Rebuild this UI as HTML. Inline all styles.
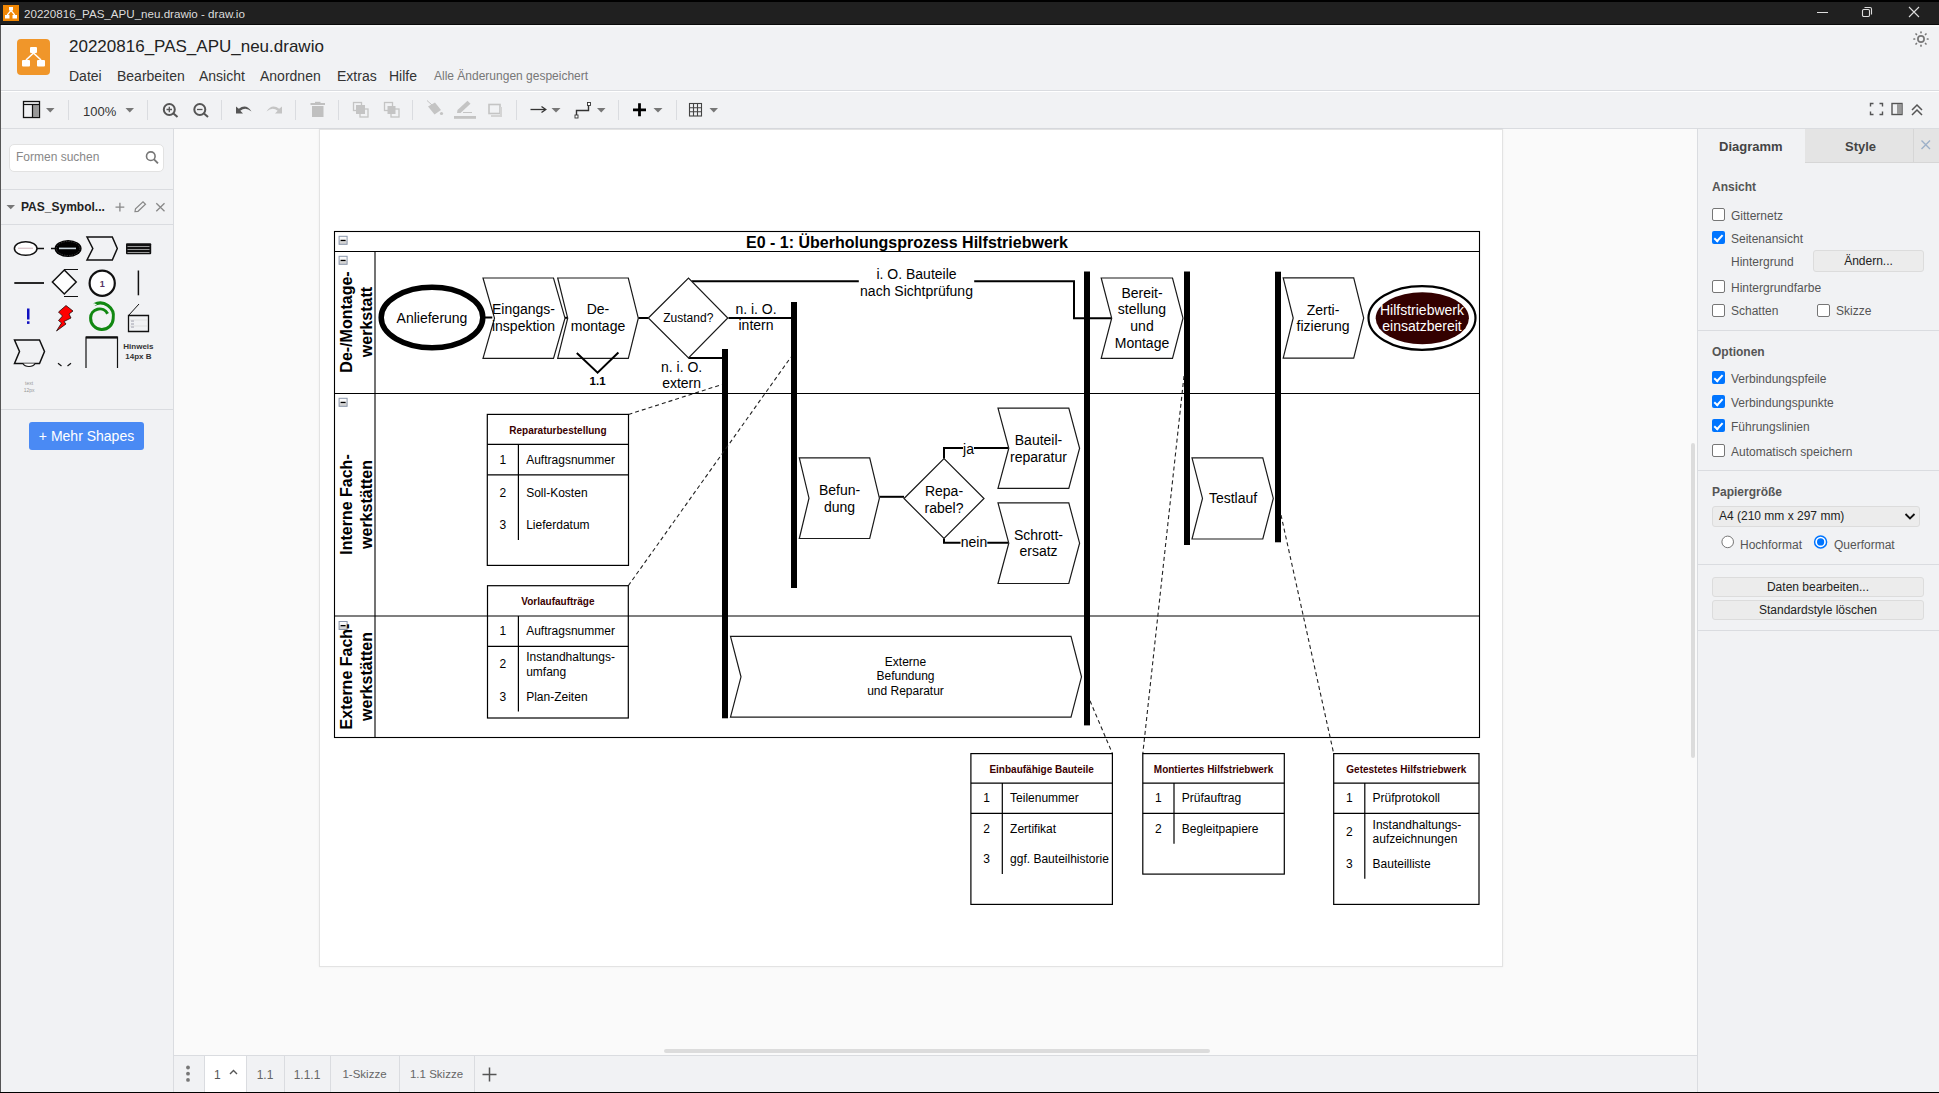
<!DOCTYPE html>
<html><head><meta charset="utf-8">
<style>
*{margin:0;padding:0;box-sizing:border-box}
html,body{width:1939px;height:1093px;overflow:hidden;background:#f1f2f4;font-family:"Liberation Sans",sans-serif;color:#333}
.a{position:absolute}
.t{position:absolute;white-space:nowrap;line-height:1}
#titlebar{left:0;top:0;width:1939px;height:25px;background:#202020;border-top:2px solid #000}
#leftedge{left:0;top:25px;width:1px;height:1068px;background:#555}
#bottomedge{left:0;top:1092px;width:1939px;height:1px;background:#000}
.hline{position:absolute;height:1px;background:#dadce0}
.vline{position:absolute;width:1px;background:#dadce0}
.menu{font-size:14px;color:#333;top:69px}
.sep{position:absolute;width:1px;height:20px;background:#dadce0;top:100px}
.cb{position:absolute;width:13px;height:13px;border:1px solid #767676;border-radius:2px;background:#fff}
.cbc{position:absolute;width:13px;height:13px;border-radius:2px;background:#0075ff}.cbc::after{content:"";position:absolute;left:4.3px;top:1.5px;width:3.2px;height:6.8px;border:solid #fff;border-width:0 2.3px 2.3px 0;transform:rotate(42deg)}
.lbl{font-size:12px;color:#555}
.btn{position:absolute;background:#ececec;border:1px solid #dcdcdc;border-radius:3px;font-size:12px;color:#222;text-align:center;line-height:18px}
.tab{position:absolute;top:1056px;height:36px;font-size:12px;color:#666;line-height:36px;text-align:center;border-right:1px solid #dadce0}
</style></head>
<body>
<div id="titlebar" class="a"></div>
<!-- title bar icon -->
<div class="a" style="left:3px;top:5px;width:16px;height:16px;background:#f08705"></div>
<svg class="a" style="left:3px;top:5px" width="16" height="16" viewBox="0 0 16 16"><rect x="6" y="2" width="4" height="3.5" fill="#fff"/><rect x="2" y="10" width="4.5" height="3.5" fill="#fff"/><rect x="9.5" y="10" width="4.5" height="3.5" fill="#fff"/><path d="M8 5.5 L4.2 10 M8 5.5 L11.8 10" stroke="#fff" stroke-width="1.2"/></svg>
<div class="t" style="left:24px;top:8px;font-size:11.6px;color:#dcdcdc">20220816_PAS_APU_neu.drawio - draw.io</div>
<!-- window controls -->
<div class="a" style="left:1817px;top:12px;width:11px;height:1px;background:#ddd"></div>
<svg class="a" style="left:1861px;top:6px" width="12" height="12" viewBox="0 0 12 12"><rect x="1.5" y="3.5" width="7" height="7" rx="1.2" fill="none" stroke="#ddd" stroke-width="1.1"/><path d="M3.5 1.5 H9 Q10.5 1.5 10.5 3 V8.5" fill="none" stroke="#ddd" stroke-width="1.1"/></svg>
<svg class="a" style="left:1908px;top:6px" width="12" height="12" viewBox="0 0 12 12"><path d="M1 1 L11 11 M11 1 L1 11" stroke="#ddd" stroke-width="1.1"/></svg>
<div id="leftedge" class="a"></div>
<div class="a" style="left:0;top:24px;width:1939px;height:1px;background:#0a0a0a"></div>
<div class="a" style="left:1px;top:25px;width:1938px;height:2px;background:#f8f9fa"></div>

<!-- header -->
<div class="a" style="left:17px;top:39px;width:33px;height:36px;background:#f0962a;border-radius:4px"></div>
<svg class="a" style="left:17px;top:39px" width="33" height="36" viewBox="0 0 33 36"><rect x="13" y="8" width="7" height="6" rx="1" fill="#fff"/><rect x="5" y="21" width="8" height="6.5" rx="1" fill="#fff"/><rect x="20" y="21" width="8" height="6.5" rx="1" fill="#fff"/><path d="M16.5 14 L9 21 M16.5 14 L24 21" stroke="#fff" stroke-width="1.6" fill="none"/></svg>
<div class="t" style="left:69px;top:38px;font-size:17px;color:#222">20220816_PAS_APU_neu.drawio</div>
<div class="t menu" style="left:69px">Datei</div>
<div class="t menu" style="left:117px">Bearbeiten</div>
<div class="t menu" style="left:199px">Ansicht</div>
<div class="t menu" style="left:260px">Anordnen</div>
<div class="t menu" style="left:337px">Extras</div>
<div class="t menu" style="left:389px">Hilfe</div>
<div class="t" style="left:434px;top:70px;font-size:12px;color:#777">Alle Änderungen gespeichert</div>
<!-- sun icon -->
<svg class="a" style="left:1912.2px;top:30.2px" width="18" height="18" viewBox="0 0 18 18"><circle cx="9" cy="9" r="3.1" fill="none" stroke="#777" stroke-width="1.7"/><g stroke="#777" stroke-width="1.7" stroke-linecap="round"><path d="M9 2v.6M9 15.4v.6M2 9h.6M15.4 9h.6M4 4l.5.5M13.5 13.5l.5.5M4 14l.5-.5M13.5 4.5l.5-.5"/></g></svg>

<div class="hline" style="left:1px;top:90px;width:1938px"></div>
<div class="a" style="left:1px;top:91px;width:1938px;height:1px;background:#fff"></div>

<!-- toolbar (filled later) -->
<svg class="a" style="left:0;top:0" width="1939" height="128" viewBox="0 0 1939 128">
<g fill="#dadce0"><rect x="68" y="100" width="1" height="20"/><rect x="147" y="100" width="1" height="20"/><rect x="221" y="100" width="1" height="20"/><rect x="295" y="100" width="1" height="20"/><rect x="338" y="100" width="1" height="20"/><rect x="412" y="100" width="1" height="20"/><rect x="516" y="100" width="1" height="20"/><rect x="618" y="100" width="1" height="20"/><rect x="676" y="100" width="1" height="20"/></g>
<!-- format panel icon -->
<rect x="23.5" y="101.5" width="16" height="16" fill="none" stroke="#111" stroke-width="1.3"/>
<rect x="33" y="105" width="6" height="12" fill="#999"/>
<line x1="23.5" y1="104.5" x2="39.5" y2="104.5" stroke="#111" stroke-width="1.2"/>
<line x1="32.5" y1="104.5" x2="32.5" y2="117.5" stroke="#111" stroke-width="1.2"/>
<g fill="#777"><path d="M46 108 H54.5 L50.25 112.5 Z"/><path d="M125.5 108 H134 L129.75 112.5 Z"/><path d="M551.5 108 H560.5 L556 112.5 Z"/><path d="M597 108 H605.5 L601.25 112.5 Z"/><path d="M653.5 108 H662.5 L658 112.5 Z"/><path d="M709.5 108 H718 L713.75 112.5 Z"/></g>
<!-- zoom in/out -->
<g stroke="#555" stroke-width="2" fill="none"><circle cx="169.3" cy="109.5" r="5.5"/><path d="M173.5 113.5 L177.5 117"/><path d="M166.5 109.5 H172 M169.3 106.8 V112.2" stroke-width="1.3"/>
<circle cx="199.8" cy="109.5" r="5.5"/><path d="M204 113.5 L208 117"/><path d="M197 109.5 H202.5" stroke-width="1.3"/></g>
<!-- undo/redo -->
<path d="M236 106.5 L236 113.5 L243 113.5 L240.3 110.8 Q245.5 106.5 251.5 111.5 Q246 103 238.8 108.8 Z" fill="#555"/>
<path d="M282 106.5 L282 113.5 L275 113.5 L277.7 110.8 Q272.5 106.5 266.5 111.5 Q272 103 279.2 108.8 Z" fill="#c4c4c4"/>
<!-- trash -->
<g fill="#c0c0c0"><rect x="310.5" y="103" width="14.5" height="2"/><rect x="315" y="101.8" width="5.5" height="1.5"/><rect x="312" y="106" width="11.5" height="11"/></g>
<!-- to front/back -->
<g fill="none" stroke="#c4c4c4" stroke-width="1.3"><rect x="353.5" y="102.5" width="8" height="8"/><rect x="360" y="109" width="8" height="8"/></g>
<rect x="356" y="105" width="9" height="9" fill="#c4c4c4"/>
<g fill="none" stroke="#c4c4c4" stroke-width="1.3"><rect x="384.5" y="102.5" width="8" height="8"/><rect x="391" y="109" width="8" height="8"/></g>
<rect x="387.5" y="106" width="8" height="8" fill="#c4c4c4"/>
<!-- fill -->
<path d="M428 106.5 L435 102.5 L441 110 L434.5 114.5 Z" fill="#c4c4c4"/><path d="M427 100.5 L432 105" stroke="#c4c4c4" stroke-width="1"/><circle cx="441.5" cy="113.5" r="1.6" fill="#c4c4c4"/>
<!-- line color -->
<path d="M457 113 L457.5 110 L467.5 100.8 L470.5 103.8 L460.5 113 Z" fill="#c4c4c4"/><rect x="454" y="116" width="22" height="2.8" fill="#c4c4c4"/><rect x="463" y="112" width="9" height="1" fill="#c4c4c4"/>
<!-- shadow -->
<rect x="489" y="104.5" width="11" height="9" fill="none" stroke="#c4c4c4" stroke-width="1.6"/><path d="M501 107 V116 H491" fill="none" stroke="#d4d4d4" stroke-width="2"/>
<!-- connector -->
<path d="M530.5 109.5 H545" stroke="#333" stroke-width="1.3"/><path d="M541.5 106.5 L545.8 109.5 L541.5 112.5" fill="none" stroke="#333" stroke-width="1.3"/>
<!-- waypoints -->
<path d="M576.5 115 V110.5 H588.5 V104.5" fill="none" stroke="#333" stroke-width="1.4"/><rect x="575" y="115" width="3" height="3" fill="#fff" stroke="#333" stroke-width="0.9"/><rect x="587.5" y="102.5" width="3" height="3" fill="#fff" stroke="#333" stroke-width="0.9"/>
<!-- plus -->
<path d="M633 109.8 H646 M639.5 103.3 V116.3" stroke="#000" stroke-width="2.8"/>
<!-- table -->
<g fill="none" stroke="#444" stroke-width="1.1"><rect x="689.5" y="103.5" width="12" height="12.5"/><path d="M693.5 103.5 V116 M697.5 103.5 V116 M689.5 107.7 H701.5 M689.5 111.8 H701.5"/></g>
<!-- right icons -->
<g fill="none" stroke="#555" stroke-width="1.4"><path d="M1870.5 106.5 V103.5 H1873.5 M1879.5 103.5 H1882.5 V106.5 M1882.5 111.5 V114.5 H1879.5 M1873.5 114.5 H1870.5 V111.5"/>
<rect x="1892" y="103.5" width="10" height="11"/></g>
<rect x="1897" y="104" width="4.5" height="10" fill="#999"/>
<path d="M1912 110 L1917 105 L1922 110 M1912 115 L1917 110 L1922 115" fill="none" stroke="#555" stroke-width="1.5"/>
</svg>
<div class="t" style="left:83px;top:105px;font-size:13px;color:#333">100%</div>


<div class="hline" style="left:1px;top:128px;width:1938px"></div>

<!-- left sidebar -->
<div class="a" style="left:9px;top:144px;width:155px;height:28px;background:#fff;border:1px solid #e2e2e2;border-radius:5px"></div>
<div class="t" style="left:16px;top:151px;font-size:12px;color:#888">Formen suchen</div>
<svg class="a" style="left:144px;top:149px" width="16" height="16" viewBox="0 0 16 16"><circle cx="6.8" cy="7.2" r="4.3" fill="none" stroke="#777" stroke-width="1.6"/><path d="M9.8 10.2 L14 14.4" stroke="#777" stroke-width="1.9"/></svg>
<div class="hline" style="left:1px;top:189px;width:172px"></div>
<svg class="a" style="left:6px;top:205px" width="10" height="5" viewBox="0 0 10 5"><path d="M0.5 0 H9 L4.75 4.3 Z" fill="#777"/></svg>
<div class="t" style="left:21px;top:201px;font-size:12px;font-weight:bold;color:#222">PAS_Symbol...</div>
<svg class="a" style="left:110px;top:196px" width="60" height="22" viewBox="110 196 60 22"><path d="M115.5 207.2 H124.3 M119.9 202.8 V211.6" stroke="#888" stroke-width="1.3"/><path d="M135 211.5 L135.5 208.8 L143 201.8 L145.5 204.3 L138 211.3 Z" fill="none" stroke="#888" stroke-width="1.2"/><path d="M156.3 203.2 L164.5 211.3 M164.5 203.2 L156.3 211.3" stroke="#888" stroke-width="1.3"/></svg>
<div class="hline" style="left:1px;top:224px;width:172px"></div>
<svg class="a" style="left:0;top:230px" width="172" height="170" viewBox="0 230 172 170">
<g fill="none" stroke="#111" stroke-width="1.5">
<ellipse cx="25.7" cy="248.5" rx="11.3" ry="6.8" fill="#fff"/><path d="M37 248.5 H44"/>
<path d="M51 248.5 H55.5"/>
<path d="M87 237 H112.3 L117.3 248.5 L112.3 260 H87 L92.8 248.5 Z"/>
<path d="M14.3 283 H44" stroke-width="1.8"/>
<path d="M64.3 270 L76.2 282 L64.3 294 L52.4 282 Z" fill="#fff"/><path d="M64 269.5 H78 M64 296.5 H78" stroke-width="1.2"/>
<circle cx="102.2" cy="283.2" r="12.6" fill="#fff" stroke-width="2.2"/>
<path d="M138.4 270.5 V295.3" stroke-width="1.5"/>
<path d="M128.5 315.5 H148.5 V331.5 H128.5 Z" stroke-width="1.3"/><path d="M128.5 315.5 L139 304" stroke-width="1"/>
<path d="M14.5 340 H39.5 L44.5 351.5 L39.5 363.5 H14.5 L19.5 351.5 Z"/>
<path d="M86 368 V337 H117.5 V368" stroke-width="1.2"/><path d="M86 337.5 H117.5" stroke-width="2.2"/>
<path d="M58 363.2 L61.5 366 M67.5 366 L71 363.2" stroke-width="1.2"/>
</g>
<ellipse cx="68.1" cy="248.5" rx="13.5" ry="8.6" fill="#000"/><ellipse cx="68.1" cy="248.5" rx="11.8" ry="7" fill="none" stroke="#666" stroke-width="0.5" stroke-dasharray="1.5 1"/>
<rect x="59" y="247.6" width="17" height="1.6" fill="#c8d4dc"/>
<rect x="18" y="247.6" width="15" height="1.4" fill="#dcc8cc"/>
<rect x="126" y="243.2" width="25.2" height="11" fill="#111" rx="1"/><rect x="127.5" y="246" width="22" height="1" fill="#999"/><rect x="127.5" y="249" width="22" height="1" fill="#999"/><rect x="127.5" y="252" width="22" height="1" fill="#999"/>
<text x="102.2" y="286.5" font-size="9" font-weight="bold" fill="#536" text-anchor="middle" font-family="Liberation Sans">1</text>
<rect x="27" y="308.5" width="2.5" height="11" fill="#1010c0"/><rect x="27" y="321.3" width="2.5" height="2.6" fill="#1010c0"/>
<path d="M66 305.5 L73 311 L69 314 L71 318 L64 321.5 L66 324 L56.5 331 L61.5 323 L58.5 320.5 L62.5 316 L58.5 312 Z" fill="#f00" stroke="#000" stroke-width="0.7"/>
<path d="M107.6 313.8 A9 9 0 0 0 90.6 318 A11.3 11.3 0 0 0 113.2 318.5 A13.2 13.2 0 0 0 94 304.6" fill="none" stroke="#118811" stroke-width="3"/><path d="M93.2 302.8 L97 304.5 L93.8 306.3 Z" fill="#f1f2f4"/>
<path d="M131 321 H134 M131 324 H134 M131 327 H134" stroke="#889" stroke-width="0.8"/><path d="M129 320 H148 M129 326 H148" stroke="#ccc" stroke-width="0.5"/>
<path d="M23 363.5 Q24.5 366.5 29 366.5 Q33.5 366.5 35 363.5" fill="#fff" stroke="#111" stroke-width="1.2"/>
<text x="138.4" y="349" font-size="8" font-weight="bold" fill="#333" text-anchor="middle" font-family="Liberation Sans">Hinweis</text>
<text x="138.4" y="359" font-size="8" font-weight="bold" fill="#333" text-anchor="middle" font-family="Liberation Sans">14px B</text>
<text x="29.1" y="384.5" font-size="5" fill="#999" text-anchor="middle" font-family="Liberation Sans">text</text>
<text x="29.1" y="391.5" font-size="5" fill="#999" text-anchor="middle" font-family="Liberation Sans">12px</text>
</svg>
<div class="hline" style="left:1px;top:409px;width:172px"></div>
<div class="a" style="left:29px;top:422px;width:115px;height:28px;background:#4a8af4;border-radius:3px"></div>
<div class="t" style="left:29px;top:429px;width:115px;text-align:center;font-size:14px;color:#fff">+ Mehr Shapes</div>

<div class="vline" style="left:173px;top:129px;height:963px"></div>

<!-- canvas -->
<div class="a" style="left:174px;top:129px;width:1523px;height:926px;background:#fafafa"></div>
<div class="a" style="left:320px;top:130px;width:1182px;height:836px;background:#fff;box-shadow:0 0 0 1px #e3e3e3,0 0 2px 1px rgba(0,0,0,0.06)"></div>
<!-- DIAGRAM START -->
<svg class="a" style="left:0;top:0" width="1939" height="1093" viewBox="0 0 1939 1093" font-family="Liberation Sans">
<defs><linearGradient id="mg" x1="0" y1="0" x2="0" y2="1"><stop offset="0" stop-color="#fff"/><stop offset="0.5" stop-color="#f4f4f4"/><stop offset="0.55" stop-color="#d8d8d8"/><stop offset="1" stop-color="#d0d0d0"/></linearGradient></defs>
<g fill="none" stroke="#000" stroke-width="1.1">
<rect x="334.5" y="231.5" width="1145" height="506"/>
<path d="M334.5 251.5 H1479.5 M334.5 393.5 H1479.5 M334.5 616 H1479.5 M375 251.5 V737.5"/>
</g>
<rect x="339.1" y="236.3" width="8" height="8" fill="url(#mg)" stroke="#8a96ab" stroke-width="1"/><rect x="340.6" y="239.8" width="5" height="1.3" fill="#000"/>
<rect x="339.1" y="256.3" width="8" height="8" fill="url(#mg)" stroke="#8a96ab" stroke-width="1"/><rect x="340.6" y="259.8" width="5" height="1.3" fill="#000"/>
<rect x="339.1" y="398.3" width="8" height="8" fill="url(#mg)" stroke="#8a96ab" stroke-width="1"/><rect x="340.6" y="401.8" width="5" height="1.3" fill="#000"/>
<rect x="339.1" y="621.5" width="8" height="8" fill="url(#mg)" stroke="#8a96ab" stroke-width="1"/><rect x="340.6" y="625" width="5" height="1.3" fill="#000"/>
<text x="907" y="248" font-size="16" font-weight="bold" fill="#000" text-anchor="middle" >E0 - 1: Überholungsprozess Hilfstriebwerk</text>
<g transform="translate(352.3,322) rotate(-90)"><text x="0" y="0" font-size="16" font-weight="bold" fill="#000" text-anchor="middle" >De-/Montage-</text></g>
<g transform="translate(372,322) rotate(-90)"><text x="0" y="0" font-size="16" font-weight="bold" fill="#000" text-anchor="middle" >werkstatt</text></g>
<g transform="translate(352.3,504.5) rotate(-90)"><text x="0" y="0" font-size="16" font-weight="bold" fill="#000" text-anchor="middle" >Interne Fach-</text></g>
<g transform="translate(372,504.5) rotate(-90)"><text x="0" y="0" font-size="16" font-weight="bold" fill="#000" text-anchor="middle" >werkstätten</text></g>
<g transform="translate(352.3,676.5) rotate(-90)"><text x="0" y="0" font-size="16" font-weight="bold" fill="#000" text-anchor="middle" >Externe Fach-</text></g>
<g transform="translate(372,676.5) rotate(-90)"><text x="0" y="0" font-size="16" font-weight="bold" fill="#000" text-anchor="middle" >werkstätten</text></g>
<rect x="791" y="302" width="6" height="286" fill="#000"/>
<rect x="722" y="349" width="6" height="369.29999999999995" fill="#000"/>
<rect x="1084" y="271.5" width="6" height="453.9" fill="#000"/>
<rect x="1184" y="271.5" width="6" height="273.5" fill="#000"/>
<rect x="1275" y="271.7" width="6" height="270.59999999999997" fill="#000"/>
<g fill="none" stroke="#000" stroke-width="2">
<path d="M485 317.5 H492.3"/>
<path d="M565 317.8 H568"/>
<path d="M638.3 318 H648.3"/>
<path d="M691.5 281.2 H858.8 M974.2 281.2 H1074 V318.3 H1111"/>
<path d="M728.5 318 H791"/>
<path d="M688.5 358 H722"/>
<path d="M879.4 496.8 H904"/>
<path d="M944 458.5 V448 H963 M974 448 H1008.2"/>
<path d="M944 538.5 V542.8 H960.5 M987.3 542.8 H1008.2"/>
</g>
<ellipse cx="432" cy="317.5" rx="50.8" ry="30.2" fill="#fff" stroke="#000" stroke-width="5.5"/>
<text x="432" y="323.4" font-size="14" font-weight="normal" fill="#000" text-anchor="middle" >Anlieferung</text>
<path d="M483 278 H553.5 L565 318.2 L553.5 358.4 H483 L494.5 318.2 Z" fill="#fff" stroke="#1a1a1a" stroke-width="1.2"/>
<text x="523.5" y="314.4" font-size="14" font-weight="normal" fill="#000" text-anchor="middle" >Eingangs-</text>
<text x="523.5" y="331.2" font-size="14" font-weight="normal" fill="#000" text-anchor="middle" >inspektion</text>
<path d="M557.7 278 H628.3 L638.3 318.2 L628.3 358.4 H557.7 L567.7 318.2 Z" fill="#fff" stroke="#1a1a1a" stroke-width="1.2"/>
<text x="598" y="314.4" font-size="14" font-weight="normal" fill="#000" text-anchor="middle" >De-</text>
<text x="598" y="331.2" font-size="14" font-weight="normal" fill="#000" text-anchor="middle" >montage</text>
<path d="M576.8 353 L597.6 372.7 L618.4 352.5" fill="none" stroke="#000" stroke-width="2"/>
<text x="597.6" y="385.2" font-size="11.5" font-weight="bold" fill="#000" text-anchor="middle" >1.1</text>
<path d="M648.3 318 L688.5 278 L727.8 318 L688.5 358 Z" fill="#fff" stroke="#1a1a1a" stroke-width="1.2"/>
<text x="688.3" y="321.5" font-size="12" font-weight="normal" fill="#000" text-anchor="middle" >Zustand?</text>
<text x="916.5" y="278.8" font-size="14" font-weight="normal" fill="#000" text-anchor="middle" >i. O. Bauteile</text>
<text x="916.5" y="295.9" font-size="14" font-weight="normal" fill="#000" text-anchor="middle" >nach Sichtprüfung</text>
<text x="756" y="313.6" font-size="14" font-weight="normal" fill="#000" text-anchor="middle" >n. i. O.</text>
<text x="756" y="329.9" font-size="14" font-weight="normal" fill="#000" text-anchor="middle" >intern</text>
<text x="681.6" y="371.5" font-size="14" font-weight="normal" fill="#000" text-anchor="middle" >n. i. O.</text>
<text x="681.6" y="388.2" font-size="14" font-weight="normal" fill="#000" text-anchor="middle" >extern</text>
<path d="M1101.2 278 H1172.5 L1183 318.2 L1172.5 358.4 H1101.2 L1111.7 318.2 Z" fill="#fff" stroke="#1a1a1a" stroke-width="1.2"/>
<text x="1142" y="297.6" font-size="14" font-weight="normal" fill="#000" text-anchor="middle" >Bereit-</text>
<text x="1142" y="314.35" font-size="14" font-weight="normal" fill="#000" text-anchor="middle" >stellung</text>
<text x="1142" y="331.1" font-size="14" font-weight="normal" fill="#000" text-anchor="middle" >und</text>
<text x="1142" y="347.85" font-size="14" font-weight="normal" fill="#000" text-anchor="middle" >Montage</text>
<path d="M1283.2 277.8 H1353.7 L1363.7 318.0 L1353.7 358.2 H1283.2 L1293.2 318.0 Z" fill="#fff" stroke="#1a1a1a" stroke-width="1.2"/>
<text x="1323" y="314.6" font-size="14" font-weight="normal" fill="#000" text-anchor="middle" >Zerti-</text>
<text x="1323" y="330.9" font-size="14" font-weight="normal" fill="#000" text-anchor="middle" >fizierung</text>
<ellipse cx="1422" cy="318" rx="53.5" ry="31.9" fill="#fff" stroke="#000" stroke-width="2.2"/>
<ellipse cx="1422.3" cy="318.2" rx="46.6" ry="26" fill="#330000"/>
<text x="1422" y="314.6" font-size="14" font-weight="normal" fill="#fff" text-anchor="middle" >Hilfstriebwerk</text>
<text x="1422" y="330.9" font-size="14" font-weight="normal" fill="#fff" text-anchor="middle" >einsatzbereit</text>
<path d="M799.3 457.8 H869.6999999999999 L879.4 498.15 L869.6999999999999 538.5 H799.3 L809.0 498.15 Z" fill="#fff" stroke="#1a1a1a" stroke-width="1.2"/>
<text x="839.5" y="495.4" font-size="14" font-weight="normal" fill="#000" text-anchor="middle" >Befun-</text>
<text x="839.5" y="512.3" font-size="14" font-weight="normal" fill="#000" text-anchor="middle" >dung</text>
<path d="M904 498.5 L944 458.5 L984 498.5 L944 538.5 Z" fill="#fff" stroke="#1a1a1a" stroke-width="1.2"/>
<text x="944" y="495.7" font-size="14" font-weight="normal" fill="#000" text-anchor="middle" >Repa-</text>
<text x="944" y="512.6" font-size="14" font-weight="normal" fill="#000" text-anchor="middle" >rabel?</text>
<text x="968.5" y="453.5" font-size="14" font-weight="normal" fill="#000" text-anchor="middle" >ja</text>
<text x="974" y="547.3" font-size="14" font-weight="normal" fill="#000" text-anchor="middle" >nein</text>
<path d="M998 408.1 H1068.8 L1079.6 448.25 L1068.8 488.4 H998 L1008.8 448.25 Z" fill="#fff" stroke="#1a1a1a" stroke-width="1.2"/>
<text x="1038.5" y="445.1" font-size="14" font-weight="normal" fill="#000" text-anchor="middle" >Bauteil-</text>
<text x="1038.5" y="461.6" font-size="14" font-weight="normal" fill="#000" text-anchor="middle" >reparatur</text>
<path d="M998 502.9 H1068.8 L1079.6 543.2 L1068.8 583.5 H998 L1008.8 543.2 Z" fill="#fff" stroke="#1a1a1a" stroke-width="1.2"/>
<text x="1038.5" y="539.8" font-size="14" font-weight="normal" fill="#000" text-anchor="middle" >Schrott-</text>
<text x="1038.5" y="556.4" font-size="14" font-weight="normal" fill="#000" text-anchor="middle" >ersatz</text>
<path d="M1192 457.8 H1262.8 L1273.3 498.4 L1262.8 539 H1192 L1202.5 498.4 Z" fill="#fff" stroke="#1a1a1a" stroke-width="1.2"/>
<text x="1233" y="503.4" font-size="14" font-weight="normal" fill="#000" text-anchor="middle" >Testlauf</text>
<path d="M730.5 636.4 H1071.0 L1081.5 676.8 L1071.0 717.2 H730.5 L741.0 676.8 Z" fill="#fff" stroke="#1a1a1a" stroke-width="1.2"/>
<text x="905.5" y="665.8" font-size="12" font-weight="normal" fill="#000" text-anchor="middle" >Externe</text>
<text x="905.5" y="680.4" font-size="12" font-weight="normal" fill="#000" text-anchor="middle" >Befundung</text>
<text x="905.5" y="695.2" font-size="12" font-weight="normal" fill="#000" text-anchor="middle" >und Reparatur</text>
<g fill="none" stroke="#222" stroke-width="1.1" stroke-dasharray="4 3">
<path d="M628.5 414.4 L722 384.5"/>
<path d="M628.3 585.7 L791 357"/>
<path d="M1090 700.8 L1112.4 753.5"/>
<path d="M1184 376 L1142.8 753.6"/>
<path d="M1281 515 L1333.7 753.6"/>
</g>
<g fill="none" stroke="#000" stroke-width="1.2">
<rect x="487.3" y="414.4" width="141.2" height="151.0" fill="#fff"/>
<path d="M487.3 444.4 H628.5 M487.3 474.8 H628.5 M518.4 444.4 V540"/>
</g>
<text x="557.9" y="433.6" font-size="10" font-weight="bold" fill="#3a0000" text-anchor="middle" >Reparaturbestellung</text>
<text x="502.85" y="463.7" font-size="12" font-weight="normal" fill="#000" text-anchor="middle" >1</text>
<text x="526.1999999999999" y="463.7" font-size="12" font-weight="normal" fill="#000" text-anchor="start" >Auftragsnummer</text>
<text x="502.85" y="496.7" font-size="12" font-weight="normal" fill="#000" text-anchor="middle" >2</text>
<text x="526.1999999999999" y="496.7" font-size="12" font-weight="normal" fill="#000" text-anchor="start" >Soll-Kosten</text>
<text x="502.85" y="528.9" font-size="12" font-weight="normal" fill="#000" text-anchor="middle" >3</text>
<text x="526.1999999999999" y="528.9" font-size="12" font-weight="normal" fill="#000" text-anchor="start" >Lieferdatum</text>
<g fill="none" stroke="#000" stroke-width="1.2">
<rect x="487.5" y="585.7" width="140.79999999999995" height="132.29999999999995" fill="#fff"/>
<path d="M487.5 616 H628.3 M487.5 646.4 H628.3 M518.4 616 V711.6"/>
</g>
<text x="557.9" y="605.0" font-size="10" font-weight="bold" fill="#3a0000" text-anchor="middle" >Vorlaufaufträge</text>
<text x="502.95" y="635.0" font-size="12" font-weight="normal" fill="#000" text-anchor="middle" >1</text>
<text x="526.1999999999999" y="635.0" font-size="12" font-weight="normal" fill="#000" text-anchor="start" >Auftragsnummer</text>
<text x="502.95" y="668.0" font-size="12" font-weight="normal" fill="#000" text-anchor="middle" >2</text>
<text x="526.1999999999999" y="661.3" font-size="12" font-weight="normal" fill="#000" text-anchor="start" >Instandhaltungs-</text>
<text x="526.1999999999999" y="676.3" font-size="12" font-weight="normal" fill="#000" text-anchor="start" >umfang</text>
<text x="502.95" y="700.5" font-size="12" font-weight="normal" fill="#000" text-anchor="middle" >3</text>
<text x="526.1999999999999" y="700.5" font-size="12" font-weight="normal" fill="#000" text-anchor="start" >Plan-Zeiten</text>
<g fill="none" stroke="#000" stroke-width="1.2">
<rect x="970.9" y="753.6" width="141.5000000000001" height="150.79999999999995" fill="#fff"/>
<path d="M970.9 783.1 H1112.4 M970.9 813.4 H1112.4 M1002.3 783.1 V874"/>
</g>
<text x="1041.65" y="772.6" font-size="10" font-weight="bold" fill="#3a0000" text-anchor="middle" >Einbaufähige Bauteile</text>
<text x="986.5999999999999" y="802.1999999999999" font-size="12" font-weight="normal" fill="#000" text-anchor="middle" >1</text>
<text x="1010.0999999999999" y="802.1999999999999" font-size="12" font-weight="normal" fill="#000" text-anchor="start" >Teilenummer</text>
<text x="986.5999999999999" y="832.5" font-size="12" font-weight="normal" fill="#000" text-anchor="middle" >2</text>
<text x="1010.0999999999999" y="832.5" font-size="12" font-weight="normal" fill="#000" text-anchor="start" >Zertifikat</text>
<text x="986.5999999999999" y="862.8" font-size="12" font-weight="normal" fill="#000" text-anchor="middle" >3</text>
<text x="1010.0999999999999" y="862.8" font-size="12" font-weight="normal" fill="#000" text-anchor="start" >ggf. Bauteilhistorie</text>
<g fill="none" stroke="#000" stroke-width="1.2">
<rect x="1142.8" y="753.6" width="141.5" height="120.5" fill="#fff"/>
<path d="M1142.8 783.1 H1284.3 M1142.8 813.4 H1284.3 M1174 783.1 V843.8"/>
</g>
<text x="1213.55" y="772.6" font-size="10" font-weight="bold" fill="#3a0000" text-anchor="middle" >Montiertes Hilfstriebwerk</text>
<text x="1158.4" y="802.1999999999999" font-size="12" font-weight="normal" fill="#000" text-anchor="middle" >1</text>
<text x="1181.8" y="802.1999999999999" font-size="12" font-weight="normal" fill="#000" text-anchor="start" >Prüfauftrag</text>
<text x="1158.4" y="832.5" font-size="12" font-weight="normal" fill="#000" text-anchor="middle" >2</text>
<text x="1181.8" y="832.5" font-size="12" font-weight="normal" fill="#000" text-anchor="start" >Begleitpapiere</text>
<g fill="none" stroke="#000" stroke-width="1.2">
<rect x="1333.7" y="753.6" width="145.29999999999995" height="150.79999999999995" fill="#fff"/>
<path d="M1333.7 783.1 H1479 M1333.7 813.4 H1479 M1364.8 783.1 V878.7"/>
</g>
<text x="1406.35" y="772.6" font-size="10" font-weight="bold" fill="#3a0000" text-anchor="middle" >Getestetes Hilfstriebwerk</text>
<text x="1349.25" y="802.1999999999999" font-size="12" font-weight="normal" fill="#000" text-anchor="middle" >1</text>
<text x="1372.6" y="802.1999999999999" font-size="12" font-weight="normal" fill="#000" text-anchor="start" >Prüfprotokoll</text>
<text x="1349.25" y="835.5999999999999" font-size="12" font-weight="normal" fill="#000" text-anchor="middle" >2</text>
<text x="1372.6" y="828.5999999999999" font-size="12" font-weight="normal" fill="#000" text-anchor="start" >Instandhaltungs-</text>
<text x="1372.6" y="843.3" font-size="12" font-weight="normal" fill="#000" text-anchor="start" >aufzeichnungen</text>
<text x="1349.25" y="867.8" font-size="12" font-weight="normal" fill="#000" text-anchor="middle" >3</text>
<text x="1372.6" y="867.8" font-size="12" font-weight="normal" fill="#000" text-anchor="start" >Bauteilliste</text>
</svg>
<!-- DIAGRAM END -->
<div class="a" style="left:664px;top:1049px;width:546px;height:4px;background:#dcdcdc;border-radius:2px"></div>

<!-- right panel -->
<div class="a" style="left:1805px;top:129px;width:134px;height:34px;background:#e4e4e4;border-bottom:1px solid #d6d6d6"></div>
<div class="a" style="left:1913px;top:129px;width:1px;height:34px;background:#d6d6d6"></div>
<div class="t" style="left:1719px;top:140px;font-size:13px;font-weight:bold;color:#444">Diagramm</div>
<div class="t" style="left:1845px;top:140px;font-size:13px;font-weight:bold;color:#444">Style</div>
<svg class="a" style="left:1920px;top:139px" width="12" height="12" viewBox="0 0 12 12"><path d="M1.5 1.5 L10 10 M10 1.5 L1.5 10" stroke="#9cb0c8" stroke-width="1.4"/></svg>
<div class="t" style="left:1712px;top:181px;font-size:12px;font-weight:bold;color:#555">Ansicht</div>
<div class="cb" style="left:1712px;top:208px"></div><div class="t lbl" style="left:1731px;top:210px">Gitternetz</div>
<div class="cbc" style="left:1712px;top:231px"></div><div class="t lbl" style="left:1731px;top:233px">Seitenansicht</div>
<div class="t lbl" style="left:1731px;top:256px">Hintergrund</div>
<div class="btn" style="left:1813px;top:250px;width:111px;height:22px;line-height:20px">Ändern...</div>
<div class="cb" style="left:1712px;top:280px"></div><div class="t lbl" style="left:1731px;top:282px">Hintergrundfarbe</div>
<div class="cb" style="left:1712px;top:304px"></div><div class="t lbl" style="left:1731px;top:305px">Schatten</div>
<div class="cb" style="left:1817px;top:304px"></div><div class="t lbl" style="left:1836px;top:305px">Skizze</div>
<div class="hline" style="left:1698px;top:330px;width:241px"></div>
<div class="t" style="left:1712px;top:346px;font-size:12px;font-weight:bold;color:#555">Optionen</div>
<div class="cbc" style="left:1712px;top:371px"></div><div class="t lbl" style="left:1731px;top:373px">Verbindungspfeile</div>
<div class="cbc" style="left:1712px;top:395px"></div><div class="t lbl" style="left:1731px;top:397px">Verbindungspunkte</div>
<div class="cbc" style="left:1712px;top:419px"></div><div class="t lbl" style="left:1731px;top:421px">Führungslinien</div>
<div class="cb" style="left:1712px;top:444px"></div><div class="t lbl" style="left:1731px;top:446px">Automatisch speichern</div>
<div class="hline" style="left:1698px;top:470px;width:241px"></div>
<div class="t" style="left:1712px;top:486px;font-size:12px;font-weight:bold;color:#555">Papiergröße</div>
<div class="a" style="left:1712px;top:506px;width:208px;height:21px;background:#ececec;border:1px solid #dcdcdc;border-radius:3px"></div>
<div class="t" style="left:1719px;top:510px;font-size:12px;color:#222">A4 (210 mm x 297 mm)</div>
<svg class="a" style="left:1904px;top:512px" width="12" height="9" viewBox="0 0 12 9"><path d="M1.5 2 L6 6.5 L10.5 2" fill="none" stroke="#111" stroke-width="1.8"/></svg>
<svg class="a" style="left:1720px;top:534px" width="110" height="16" viewBox="1720 534 110 16"><circle cx="1727.7" cy="541.9" r="5.8" fill="#fff" stroke="#767676" stroke-width="1"/><circle cx="1820.6" cy="541.9" r="6" fill="#fff" stroke="#0075ff" stroke-width="1.5"/><circle cx="1820.6" cy="541.9" r="3.6" fill="#0075ff"/></svg>
<div class="t lbl" style="left:1740px;top:539px">Hochformat</div>
<div class="t lbl" style="left:1834px;top:539px">Querformat</div>
<div class="hline" style="left:1698px;top:564px;width:241px"></div>
<div class="btn" style="left:1712px;top:577px;width:212px;height:20px">Daten bearbeiten...</div>
<div class="btn" style="left:1712px;top:600px;width:212px;height:20px">Standardstyle löschen</div>
<div class="hline" style="left:1698px;top:630px;width:241px"></div>
<div class="a" style="left:1691px;top:443px;width:4px;height:315px;background:#dcdcdc;border-radius:2px"></div>

<div class="vline" style="left:1697px;top:129px;height:963px"></div>

<!-- footer -->
<div class="a" style="left:205px;top:1056px;width:41px;height:36px;background:#fff"></div>
<svg class="a" style="left:184px;top:1064px" width="8" height="20" viewBox="0 0 8 20"><circle cx="4" cy="3.5" r="1.9" fill="#777"/><circle cx="4" cy="9.7" r="1.9" fill="#777"/><circle cx="4" cy="15.9" r="1.9" fill="#777"/></svg>
<div class="vline" style="left:204px;top:1056px;height:36px"></div>
<div class="vline" style="left:246px;top:1056px;height:36px"></div>
<div class="vline" style="left:284px;top:1056px;height:36px"></div>
<div class="vline" style="left:330px;top:1056px;height:36px"></div>
<div class="vline" style="left:399px;top:1056px;height:36px"></div>
<div class="vline" style="left:474px;top:1056px;height:36px"></div>
<div class="t" style="left:214px;top:1069px;font-size:12px;color:#555">1</div>
<svg class="a" style="left:229px;top:1069px" width="9" height="6" viewBox="0 0 9 6"><path d="M1 5 L4.5 1.5 L8 5" fill="none" stroke="#555" stroke-width="1.4"/></svg>
<div class="t" style="left:246px;top:1069px;width:38px;text-align:center;font-size:12px;color:#666">1.1</div>
<div class="t" style="left:284px;top:1069px;width:46px;text-align:center;font-size:12px;color:#666">1.1.1</div>
<div class="t" style="left:330px;top:1069px;width:69px;text-align:center;font-size:11.5px;color:#666">1-Skizze</div>
<div class="t" style="left:399px;top:1069px;width:75px;text-align:center;font-size:11.5px;color:#666">1.1 Skizze</div>
<svg class="a" style="left:482px;top:1067px" width="15" height="15" viewBox="0 0 15 15"><path d="M0.5 7.5 H14.5 M7.5 0.5 V14.5" stroke="#555" stroke-width="1.5"/></svg>

<div class="hline" style="left:174px;top:1055px;width:1523px"></div>

<div id="bottomedge" class="a"></div>
</body></html>
